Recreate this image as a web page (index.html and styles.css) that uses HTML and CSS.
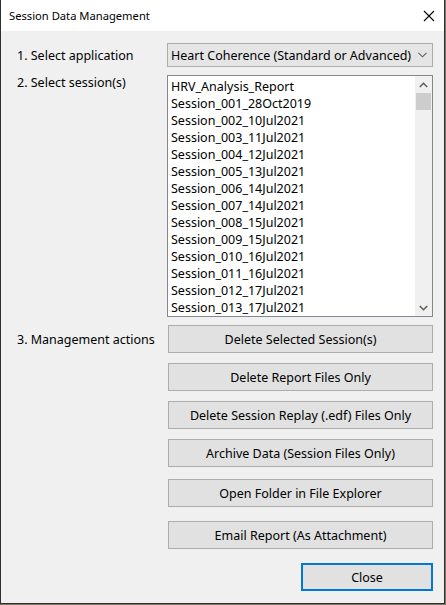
FILE: index.html
```html
<!DOCTYPE html>
<html>
<head>
<meta charset="utf-8">
<link rel="stylesheet" href="styles.css">
</head>
<body>
<div class="window">
  <div class="titlebar">
    <span class="title">Session Data Management</span>
    <svg class="close-x" width="12" height="12" viewBox="0 0 12 12"><path d="M1 1 L11 11 M11 1 L1 11" stroke="#000" stroke-width="1.1" fill="none"/></svg>
  </div>
  <div class="content">
    <div class="row row-app">
      <div class="label">1. Select application</div>
      <div class="combo">
        <span class="combo-text">Heart Coherence (Standard or Advanced)</span>
        <svg class="chev" width="9" height="6" viewBox="0 0 9 6"><path d="M0.5 0.8 L4.5 4.8 L8.5 0.8" stroke="#606060" stroke-width="1.1" fill="none"/></svg>
      </div>
    </div>
    <div class="row row-sessions">
      <div class="label label-top">2. Select session(s)</div>
      <div class="listbox">
        <ul class="items">
          <li>HRV_Analysis_Report</li>
          <li>Session_001_28Oct2019</li>
          <li>Session_002_10Jul2021</li>
          <li>Session_003_11Jul2021</li>
          <li>Session_004_12Jul2021</li>
          <li>Session_005_13Jul2021</li>
          <li>Session_006_14Jul2021</li>
          <li>Session_007_14Jul2021</li>
          <li>Session_008_15Jul2021</li>
          <li>Session_009_15Jul2021</li>
          <li>Session_010_16Jul2021</li>
          <li>Session_011_16Jul2021</li>
          <li>Session_012_17Jul2021</li>
          <li>Session_013_17Jul2021</li>
        </ul>
        <div class="scrollbar">
          <div class="sb-btn"><svg width="9" height="6" viewBox="0 0 9 6"><path d="M0.8 5 L4.5 1.3 L8.2 5" stroke="#606060" stroke-width="1.6" fill="none"/></svg></div>
          <div class="sb-thumb"></div>
          <div class="sb-track"></div>
          <div class="sb-btn"><svg width="9" height="6" viewBox="0 0 9 6"><path d="M0.8 1 L4.5 4.7 L8.2 1" stroke="#606060" stroke-width="1.6" fill="none"/></svg></div>
        </div>
      </div>
    </div>
    <div class="row row-actions">
      <div class="label label-actions">3. Management actions</div>
      <div class="actions">
        <button class="btn">Delete Selected Session(s)</button>
        <button class="btn">Delete Report Files Only</button>
        <button class="btn">Delete Session Replay (.edf) Files Only</button>
        <button class="btn">Archive Data (Session Files Only)</button>
        <button class="btn btn-g12">Open Folder in File Explorer</button>
        <button class="btn btn-g14">Email Report (As Attachment)</button>
      </div>
    </div>
    <div class="footer">
      <button class="btn btn-close">Close</button>
    </div>
  </div>
</div>
</body>
</html>
```

FILE: styles.css
```css
html, body {
  margin: 0;
  padding: 0;
}
body {
  width: 446px;
  height: 605px;
  background: #7a7868;
  font-family: "Noto Sans", "Open Sans", sans-serif;
  font-size: 12.5px;
  color: #000;
  overflow: hidden;
}
.window {
  width: 443px;
  height: 603px;
  background: #f0f0f0;
  border-left: 1px solid #2f2f2f;
  border-right: 1px solid #2f2f2f;
  border-bottom: 1px solid #2f2f2f;
  display: flex;
  flex-direction: column;
}
.titlebar {
  height: 31px;
  background: #fff;
  display: flex;
  align-items: center;
  justify-content: space-between;
  padding: 0 9px 0 8px;
  flex: none;
}
.title {
  font-size: 11.2px;
  line-height: 16px;
}
.close-x {
  display: block;
}
.content {
  padding: 12px 0 0 16px;
  display: flex;
  flex-direction: column;
}
.row {
  display: grid;
  grid-template-columns: 150px 266px;
}
.label {
  line-height: 16px;
  white-space: nowrap;
}
.row-app {
  align-items: center;
}
.row-app .label {
  padding-top: 2px;
}
.label-top {
  align-self: start;
  margin-top: 0;
}
.combo {
  height: 22px;
  border: 1px solid #adadad;
  background: #e5e5e5;
  display: flex;
  align-items: center;
  justify-content: space-between;
  padding: 0 5px 0 3px;
}
.combo-text {
  line-height: 16px;
  padding-top: 2px;
  white-space: nowrap;
}
.chev {
  display: block;
}
.row-sessions {
  margin-top: 8px;
}
.listbox {
  height: 240px;
  border: 1px solid #828790;
  background: #fff;
  display: flex;
}
.items {
  list-style: none;
  margin: 0;
  padding: 2px 0 0 1px;
  flex: 1;
  overflow: hidden;
}
.items li {
  height: 17px;
  line-height: 17px;
  padding-left: 2px;
  white-space: nowrap;
}
.scrollbar {
  width: 17px;
  background: #f0f0f0;
  display: flex;
  flex-direction: column;
}
.sb-btn {
  height: 17px;
  display: flex;
  align-items: center;
  justify-content: center;
  flex: none;
}
.sb-thumb {
  height: 17px;
  margin: 0 1px;
  background: #cdcdcd;
  flex: none;
}
.sb-track {
  flex: 1;
}
.row-actions {
  margin-top: 8px;
}
.label-actions {
  margin-top: 7px;
  align-self: start;
}
.actions {
  display: flex;
  flex-direction: column;
  gap: 10px;
  padding-left: 1px;
}
.btn {
  font-family: inherit;
  font-size: 12.5px;
  color: #000;
  height: 28px;
  width: 265px;
  margin: 0;
  padding: 2px 0 0 0;
  border: 1px solid #adadad;
  background: #e1e1e1;
  line-height: 16px;
  white-space: nowrap;
}
.btn-g12 {
  margin-top: 2px;
}
.btn-g14 {
  margin-top: 4px;
}
.footer {
  display: flex;
  justify-content: flex-end;
  margin-top: 14px;
  padding-right: 11px;
}
.btn-close {
  width: 132px;
  border: 2px solid #0078d7;
}
```
